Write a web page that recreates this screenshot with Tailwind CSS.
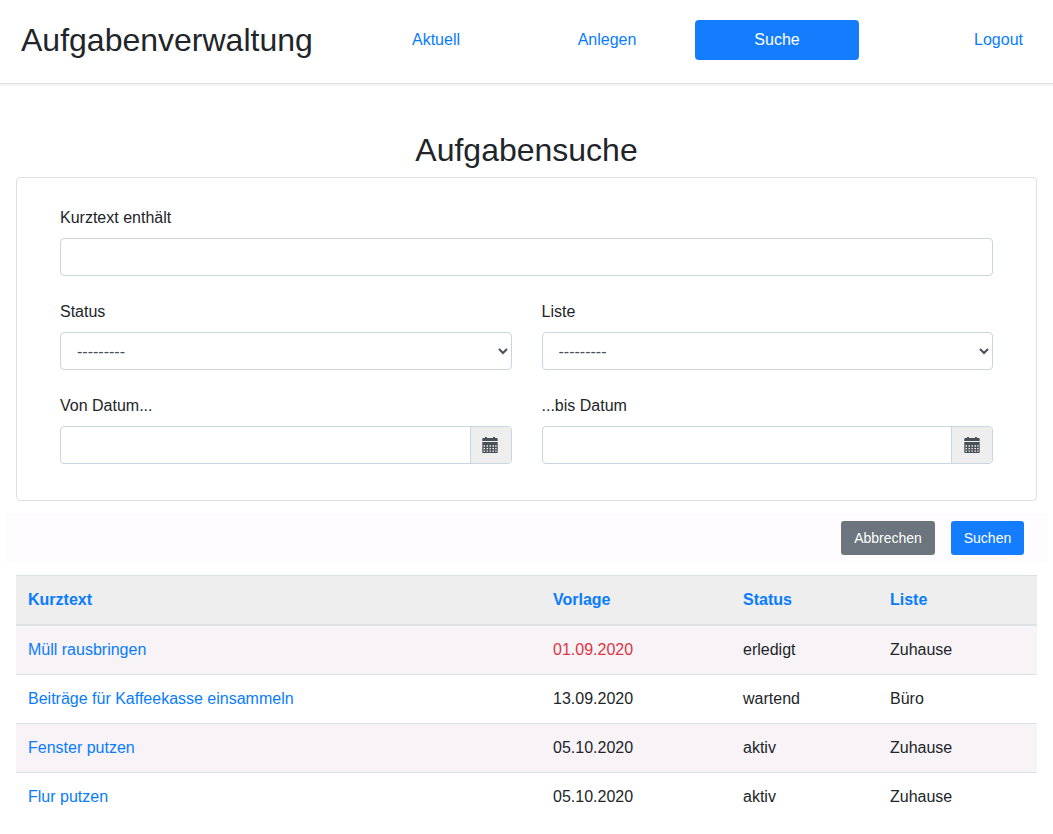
<!DOCTYPE html>
<html lang="de">
<head>
<meta charset="utf-8">
<title>Aufgabenverwaltung</title>
<script src="https://cdn.jsdelivr.net/npm/@tailwindcss/browser@4"></script>
</head>
<body class="h-[834px] overflow-hidden bg-white font-['Liberation_Sans',Arial,sans-serif] text-base leading-6 text-[#212529]">
<svg class="hidden">
  <symbol id="calendar" viewBox="0 0 16 16">
    <path fill="#495057" d="M3 0h2v1h6V0h2v1h2l.7.700V4H.3V1.700L1 1h2z"/>
    <path fill="#495057" fill-rule="evenodd" d="M.3 5h15.400v10.500l-.5.500H.8l-.5-.5zM1.500 8.200v1.500H3V8.200zM4.500 8.200v1.500H6V8.200zM7.400 8.200v1.500h1.500V8.200zM10.400 8.200v1.500H12V8.200zM13.200 8.200v1.500h1.400V8.200zM1.500 11v1.200H3V11zM4.500 11v1.200H6V11zM7.400 11v1.200h1.500V11zM10.400 11v1.200H12V11zM13.200 11v1.200h1.400V11zM1.500 13.600v1.200H3v-1.200zM4.500 13.600v1.200H6v-1.200zM7.400 13.600v1.200h1.500v-1.200zM10.400 13.600v1.200H12v-1.200zM13.200 13.600v1.200h1.400v-1.200z"/>
  </symbol>
</svg>
<header class="flex h-[84px] items-start border-b border-[#dee0e2] pt-5 pr-[30px] pl-[21px] leading-10 text-[#087cff] shadow-[0_2px_0_#f7f4f7]">
  <h1 class="w-[333px] text-[32px] text-[#212529]">Aufgabenverwaltung</h1>
  <nav class="flex gap-[6.500px] text-center">
    <a class="w-[164px]">Aktuell</a>
    <a class="w-[164px] pl-px">Anlegen</a>
    <a class="w-[164px] rounded bg-[#147dfe] text-white">Suche</a>
  </nav>
  <a class="ml-auto">Logout</a>
</header>
<main class="px-4 pt-[47px]">
  <h2 class="h-[46px] text-center text-[32px] leading-[38px]">Aufgabensuche</h2>
  <form class="grid h-[324px] grid-cols-2 content-start gap-x-[30px] gap-y-6 rounded border border-[#dfdfdf] px-[43px] pt-7">
    <label class="col-span-2 block h-[70px]">Kurztext enthält
      <span class="mt-2 block h-[38px] rounded border border-[#cad5de]"></span>
    </label>
    <label class="block h-[70px]">Status
      <select class="mt-2 block h-[38px] w-full rounded border border-[#cad5de] bg-white px-3 py-1.5 text-[#495057]"><option>---------</option></select>
    </label>
    <label class="block h-[70px]">Liste
      <select class="mt-2 block h-[38px] w-full rounded border border-[#cad5de] bg-white px-3 py-1.5 text-[#495057]"><option>---------</option></select>
    </label>
    <label class="block h-[70px]">Von Datum...
      <span class="mt-2 flex h-[38px] justify-end overflow-hidden rounded border border-[#cad5de]">
        <span class="w-[41px] border-l border-[#cad5de] bg-[#eeeeee] pt-2.5 pl-[11px]"><svg class="size-4"><use href="#calendar"/></svg></span>
      </span>
    </label>
    <label class="block h-[70px]">...bis Datum
      <span class="mt-2 flex h-[38px] justify-end overflow-hidden rounded border border-[#cad5de]">
        <span class="w-[41px] border-l border-[#cad5de] bg-[#eeeeee] pt-2.5 pl-[11.500px]"><svg class="size-4"><use href="#calendar"/></svg></span>
      </span>
    </label>
  </form>
  <div class="-mx-[11px] mt-3 mb-3 flex h-[50px] items-center justify-end gap-4 bg-[#fffcff] pr-6 text-sm text-white">
    <button class="h-[34px] w-[94px] rounded-[3px] bg-[#6c757d]">Abbrechen</button>
    <button class="h-[34px] w-[73px] rounded-[3px] bg-[#147dfe]">Suchen</button>
  </div>
  <table class="w-full table-fixed border-separate border-spacing-0 text-left [&_td]:h-[49px] [&_td]:border-b [&_td]:border-[#dce1e4] [&_td]:px-3 [&_td]:py-0 [&_tbody>tr:last-child>td]:border-transparent [&_tbody>tr:nth-child(odd)]:bg-[#f7f3f7] [&_th]:h-[51px] [&_th]:border-t [&_th]:border-b-2 [&_th]:border-[#dce1e4] [&_th]:px-3 [&_th]:py-0">
    <thead class="bg-[#eeeeee] text-[#087cff]">
      <tr><th class="w-[525px]">Kurztext</th><th class="w-[190px]">Vorlage</th><th class="w-[147px]">Status</th><th>Liste</th></tr>
    </thead>
    <tbody>
      <tr><td class="text-[#087cff]">Müll rausbringen</td><td class="text-[#dc3545]">01.09.2020</td><td>erledigt</td><td>Zuhause</td></tr>
      <tr><td class="text-[#087cff]">Beiträge für Kaffeekasse einsammeln</td><td>13.09.2020</td><td>wartend</td><td>Büro</td></tr>
      <tr><td class="text-[#087cff]">Fenster putzen</td><td>05.10.2020</td><td>aktiv</td><td>Zuhause</td></tr>
      <tr><td class="text-[#087cff]">Flur putzen</td><td>05.10.2020</td><td>aktiv</td><td>Zuhause</td></tr>
    </tbody>
  </table>
</main>
</body>
</html>
